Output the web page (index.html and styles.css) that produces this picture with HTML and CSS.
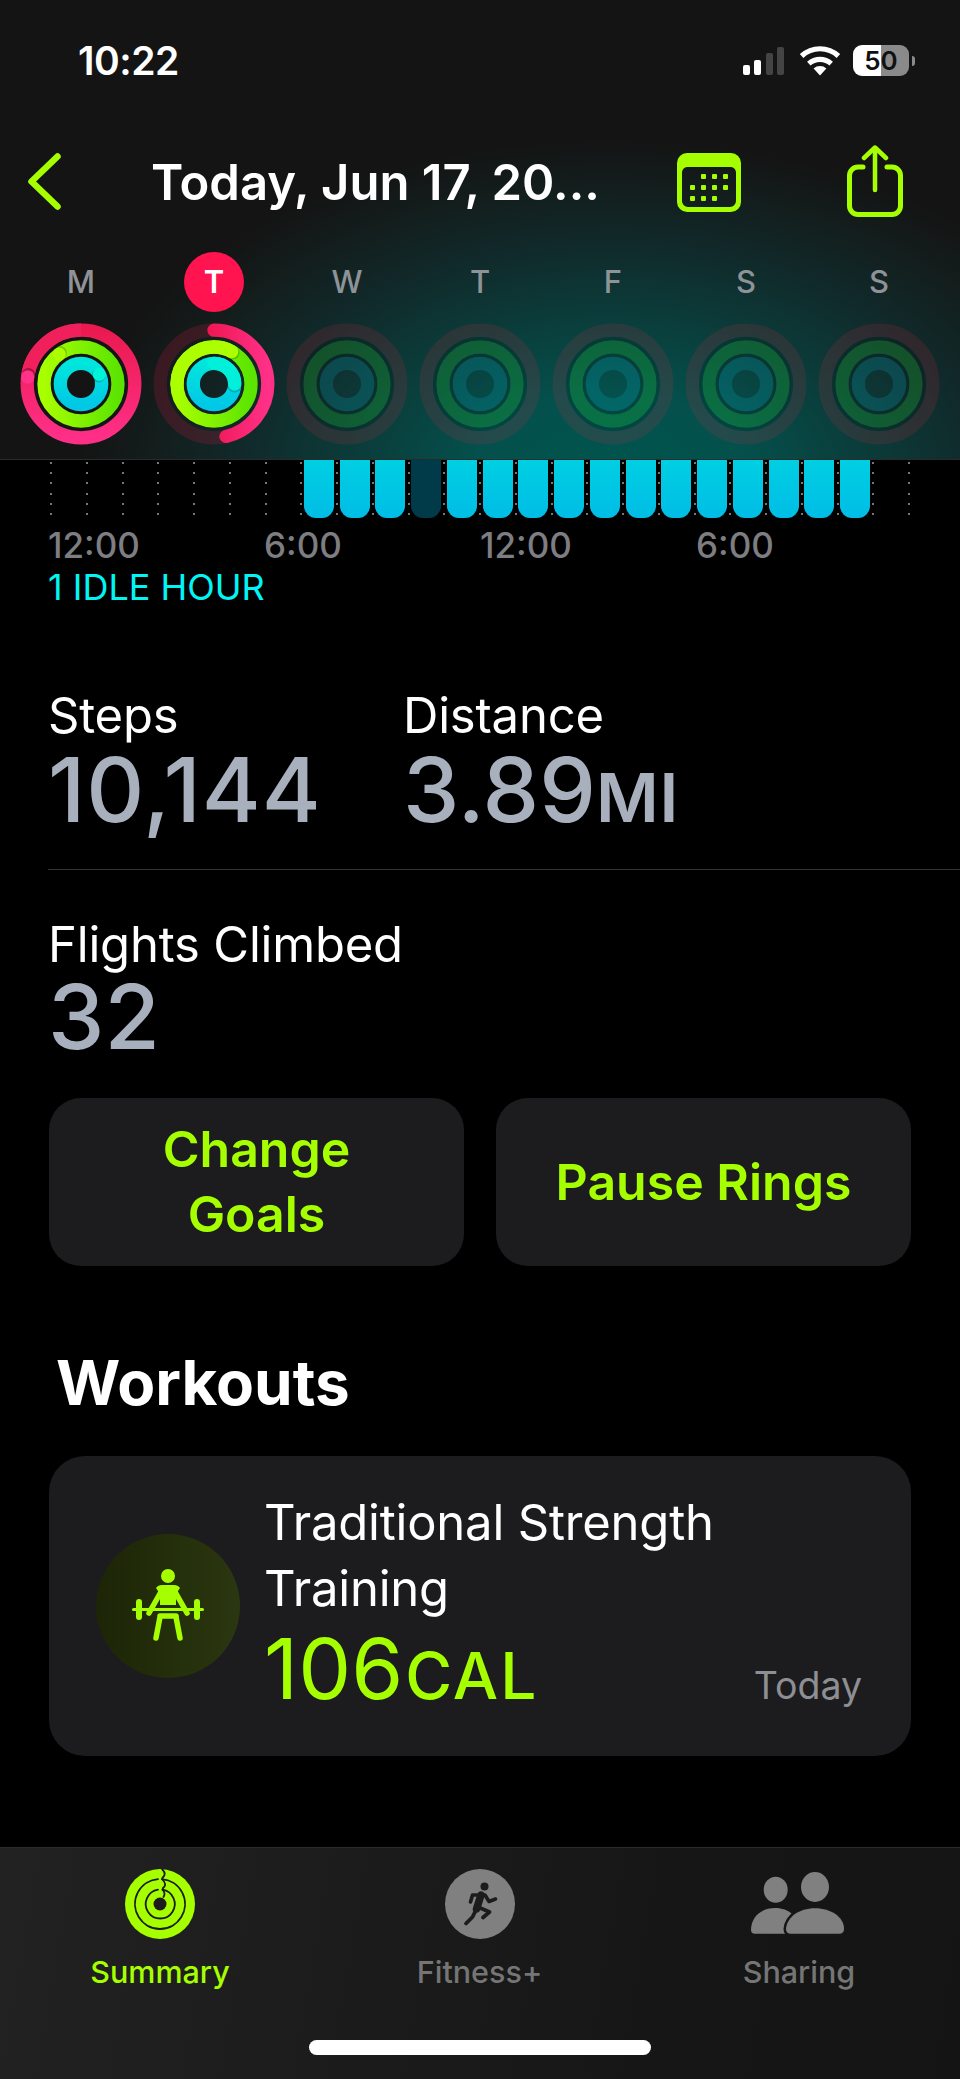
FILE: index.html
```html
<!DOCTYPE html>
<html lang="en">
<head>
    <meta charset="UTF-8">
    <meta name="viewport" content="width=device-width, initial-scale=1.0">
    <title>Activity Summary</title>
    <link rel="stylesheet" href="styles.css">
</head>
<body>
    <!-- Shared gradients and ring shapes -->
    <svg class="defs" width="0" height="0">
        <defs>
            <linearGradient id="moveGrad" x1="0" y1="0" x2="0" y2="1">
                <stop offset="0" stop-color="#ea1a50"/>
                <stop offset="1" stop-color="#ff2f88"/>
            </linearGradient>
            <linearGradient id="moveRed" x1="0" y1="0" x2="0" y2="1">
                <stop offset="0" stop-color="#e00018"/>
                <stop offset="0.5" stop-color="#f01a58"/>
                <stop offset="1" stop-color="#ff3088"/>
            </linearGradient>
            <linearGradient id="moveDark" x1="0" y1="0.5" x2="0.5" y2="0">
                <stop offset="0" stop-color="#c81238"/>
                <stop offset="1" stop-color="#f0205c"/>
            </linearGradient>
            <linearGradient id="exerciseGrad" x1="0" y1="0" x2="1" y2="0">
                <stop offset="0" stop-color="#a8ff00"/>
                <stop offset="1" stop-color="#5ce400"/>
            </linearGradient>
            <linearGradient id="standGrad" x1="0" y1="0" x2="0" y2="1">
                <stop offset="0" stop-color="#00e6dc"/>
                <stop offset="1" stop-color="#00c8e6"/>
            </linearGradient>
            <symbol id="emptyRings" viewBox="0 0 122 122">
                <circle class="ring-empty-move" cx="61" cy="61" r="53.8"/>
                <circle class="ring-empty-gap" cx="61" cy="61" r="45.2"/>
                <circle class="ring-empty-exercise" cx="61" cy="61" r="37"/>
                <circle class="ring-empty-gap" cx="61" cy="61" r="28.9"/>
                <circle class="ring-empty-stand" cx="61" cy="61" r="20.7"/>
            </symbol>
        </defs>
    </svg>

    <header class="top">
        <div class="status">
            <span class="time">10:22</span>
            <div class="status-icons">
                <svg class="signal" width="42" height="28" viewBox="0 0 42 28">
                    <rect x="0" y="18" width="7" height="10" rx="2" fill="#fff"/>
                    <rect x="11" y="13" width="7" height="15" rx="2" fill="#fff"/>
                    <rect x="23" y="6" width="7" height="22" rx="2" fill="#444"/>
                    <rect x="34" y="0" width="7" height="28" rx="2" fill="#444"/>
                </svg>
                <svg class="wifi" width="42" height="31" viewBox="0 0 42 31">
                    <path d="M21 30.5 L14.6 23.4 A10 10 0 0 1 27.4 23.4 Z" fill="#fff"/>
                    <path d="M9.8 18.6 A17 17 0 0 1 32.2 18.6" fill="none" stroke="#fff" stroke-width="5.2"/>
                    <path d="M2.6 11 A27 27 0 0 1 39.4 11" fill="none" stroke="#fff" stroke-width="5.2"/>
                </svg>
                <div class="battery">50</div>
                <div class="battery-nub"></div>
            </div>
        </div>

        <nav class="nav">
            <svg class="back" width="33" height="57" viewBox="0 0 33 57">
                <path d="M29.5 3.5 L3.5 28.5 L29.5 53.5" fill="none" stroke="#a6ff00" stroke-width="6.5" stroke-linecap="round" stroke-linejoin="round"/>
            </svg>
            <h1 class="title">Today, Jun 17, 20...</h1>
            <svg class="calendar" width="64" height="59" viewBox="0 0 64 59">
                <path fill="#a6ff00" fill-rule="evenodd" d="M10 0 H54 A10 10 0 0 1 64 10 V49 A10 10 0 0 1 54 59 H10 A10 10 0 0 1 0 49 V10 A10 10 0 0 1 10 0 Z M10 14 A5.500 5.500 0 0 0 5 19.500 V48 A6 6 0 0 0 11 54 H53 A6 6 0 0 0 59 48 V19.500 A5.500 5.500 0 0 0 54 14 Z"/>
                <g fill="#a6ff00">
                    <rect x="24" y="21" width="5" height="5" rx="1"/><rect x="35" y="21" width="5" height="5" rx="1"/><rect x="46" y="21" width="5" height="5" rx="1"/>
                    <rect x="13" y="32" width="5" height="5" rx="1"/><rect x="24" y="32" width="5" height="5" rx="1"/><rect x="35" y="32" width="5" height="5" rx="1"/><rect x="46" y="32" width="5" height="5" rx="1"/>
                    <rect x="13" y="43" width="5" height="5" rx="1"/><rect x="24" y="43" width="5" height="5" rx="1"/><rect x="35" y="43" width="5" height="5" rx="1"/>
                </g>
            </svg>
            <svg class="share" width="56" height="72" viewBox="0 0 56 72">
                <path d="M16 22 H11 A8.500 8.500 0 0 0 2.500 30.500 V61 A8.500 8.500 0 0 0 11 69.500 H45 A8.500 8.500 0 0 0 53.500 61 V30.500 A8.500 8.500 0 0 0 45 22 H40" fill="none" stroke="#a6ff00" stroke-width="5" stroke-linecap="round"/>
                <path d="M28 3 V45" fill="none" stroke="#a6ff00" stroke-width="4.500" stroke-linecap="round"/>
                <path d="M17 13 L28 2.500 L39 13" fill="none" stroke="#a6ff00" stroke-width="4.500" stroke-linecap="round" stroke-linejoin="round"/>
            </svg>
        </nav>

        <div class="week">
            <div class="day-letter">M</div>
            <div class="day-letter today">T</div>
            <div class="day-letter">W</div>
            <div class="day-letter">T</div>
            <div class="day-letter">F</div>
            <div class="day-letter">S</div>
            <div class="day-letter">S</div>

            <!-- Monday: all rings closed -->
            <svg class="rings" viewBox="0 0 122 122">
                <g fill="none" stroke-width="13.300">
                    <circle cx="61" cy="61" r="53.8" stroke="url(#moveGrad)"/>
                    <circle cx="61" cy="61" r="53.8" pathLength="100" stroke-dasharray="0 77 23 0" stroke="url(#moveDark)" transform="rotate(-90 61 61)"/>
                    <circle cx="61" cy="61" r="37" stroke="url(#exerciseGrad)"/>
                    <circle cx="61" cy="61" r="20.7" stroke="url(#standGrad)"/>
                </g>
                <circle cx="8.500" cy="52" r="7" fill="#000" opacity="0.3"/>
                <circle cx="7.700" cy="54" r="6.650" fill="#ff3189"/>
                <circle cx="40" cy="30" r="7" fill="#000" opacity="0.2"/>
                <circle cx="39.100" cy="31.200" r="6.650" fill="#acff00"/>
                <circle cx="78.500" cy="52.500" r="6.900" fill="#000" opacity="0.2"/>
                <circle cx="79.300" cy="51.300" r="6.500" fill="#00f5d8"/>
            </svg>

            <!-- Tuesday: today, move ring still open -->
            <svg class="rings" viewBox="0 0 122 122">
                <circle cx="61" cy="61" r="53.8" fill="none" stroke="#f0144a" stroke-opacity="0.18" stroke-width="13.300"/>
                <circle class="arc" cx="61" cy="61" r="53.8" pathLength="100" stroke-dasharray="46.400 100" stroke="url(#moveRed)" transform="rotate(-90 61 61)"/>
                <circle cx="61" cy="61" r="37" fill="none" stroke="url(#exerciseGrad)" stroke-width="13.300"/>
                <circle cx="79.500" cy="29.500" r="7" fill="#000" opacity="0.2"/>
                <circle class="arc" cx="61" cy="61" r="37" pathLength="100" stroke-dasharray="8 67 25 0" stroke="#acff00" transform="rotate(-90 61 61)"/>
                <circle cx="61" cy="61" r="20.700" fill="none" stroke="url(#standGrad)" stroke-width="13.300"/>
                <circle cx="81.700" cy="62.500" r="7" fill="#000" opacity="0.2"/>
                <circle class="arc" cx="61" cy="61" r="20.700" pathLength="100" stroke-dasharray="25 100" stroke="#00f0da" transform="rotate(-90 61 61)"/>
            </svg>

            <svg class="rings"><use href="#emptyRings"/></svg>
            <svg class="rings"><use href="#emptyRings"/></svg>
            <svg class="rings"><use href="#emptyRings"/></svg>
            <svg class="rings"><use href="#emptyRings"/></svg>
            <svg class="rings"><use href="#emptyRings"/></svg>
        </div>
    </header>

    <main class="content">
        <div class="chart">
            <div class="slot"></div><div class="slot"></div><div class="slot"></div><div class="slot"></div>
            <div class="slot"></div><div class="slot"></div><div class="slot"></div>
            <div class="slot"><div class="bar"></div></div>
            <div class="slot"><div class="bar"></div></div>
            <div class="slot"><div class="bar"></div></div>
            <div class="slot"><div class="bar idle"></div></div>
            <div class="slot"><div class="bar"></div></div>
            <div class="slot"><div class="bar"></div></div>
            <div class="slot"><div class="bar"></div></div>
            <div class="slot"><div class="bar"></div></div>
            <div class="slot"><div class="bar"></div></div>
            <div class="slot"><div class="bar"></div></div>
            <div class="slot"><div class="bar"></div></div>
            <div class="slot"><div class="bar"></div></div>
            <div class="slot"><div class="bar"></div></div>
            <div class="slot"><div class="bar"></div></div>
            <div class="slot"><div class="bar"></div></div>
            <div class="slot"><div class="bar"></div></div>
            <div class="slot"></div>
            <div class="slot slot-end"></div>
        </div>
        <div class="hours">
            <span>12:00</span><span>6:00</span><span>12:00</span><span>6:00</span>
        </div>
        <div class="idle-note">1 IDLE HOUR</div>

        <div class="stats">
            <div class="stat stat-steps">
                <div class="stat-label">Steps</div>
                <div class="stat-value">10,144</div>
            </div>
            <div class="stat">
                <div class="stat-label">Distance</div>
                <div class="stat-value">3.89<span class="unit">MI</span></div>
            </div>
        </div>
        <div class="divider"></div>
        <div class="stat stat-flights">
            <div class="stat-label">Flights Climbed</div>
            <div class="stat-value">32</div>
        </div>

        <div class="actions">
            <button class="action">Change<br>Goals</button>
            <button class="action">Pause Rings</button>
        </div>

        <h2 class="section-title">Workouts</h2>

        <section class="workout">
            <div class="workout-icon">
                <svg width="144" height="144" viewBox="0 0 144 144">
                    <g fill="#a6ff00">
                        <circle cx="72" cy="42" r="7"/>
                        <path d="M66 51 H78 Q82 51 84 54 L80 60 V71 H64 V60 L60 54 Q62 51 66 51 Z"/>
                        <rect x="36" y="74" width="72" height="3" rx="1.500"/>
                        <rect x="40" y="65" width="6" height="21" rx="3"/>
                        <rect x="98" y="65" width="6" height="21" rx="3"/>
                    </g>
                    <g fill="none" stroke="#a6ff00" stroke-width="5.500" stroke-linecap="round" stroke-linejoin="round">
                        <path d="M66 56 L53 79"/>
                        <path d="M78 56 L91 79"/>
                        <path d="M64 82 H80 M64 83 L60 104"/>
                        <path d="M80 83 L84 104"/>
                    </g>
                </svg>
            </div>
            <div class="workout-text">
                <div class="workout-name">Traditional Strength Training</div>
                <div class="workout-row">
                    <div class="workout-cal">106<span class="cal-unit">CAL</span></div>
                    <div class="workout-date">Today</div>
                </div>
            </div>
        </section>
    </main>

    <footer class="tabbar">
        <div class="tabs">
            <div class="tab active">
                <svg width="70" height="70" viewBox="0 0 70 70">
                    <circle cx="35" cy="35" r="35" fill="#a6ff00"/>
                    <g fill="none" stroke="#1c1c1c" stroke-width="1.800" stroke-linecap="round">
                        <path d="M37 10.100 A25 25 0 1 1 33 10.100"/>
                        <path d="M37.500 20.700 A14.500 14.500 0 1 1 33 20.700"/>
                        <path d="M37 0 Q41 4 39 7 Q37 9 37 10.100 Q41.500 14 39.500 17.500 Q37.500 19 37.500 20.700 Q41 24 38.500 28"/>
                    </g>
                    <circle cx="35" cy="35" r="6.500" fill="#1c1c1c"/>
                </svg>
                <span class="tab-label">Summary</span>
            </div>
            <div class="tab">
                <svg width="70" height="70" viewBox="0 0 70 70">
                    <circle cx="35" cy="35" r="35" fill="#808080"/>
                    <circle cx="39.500" cy="17.500" r="4" fill="#1c1c1c"/>
                    <g fill="none" stroke="#1c1c1c" stroke-linecap="round" stroke-linejoin="round">
                        <path d="M36 26 L31.500 40" stroke-width="7.500"/>
                        <path d="M25.500 33 L27.500 26 H40 L44 32.500 L50.500 30" stroke-width="3.600"/>
                        <path d="M31 41 L27.500 48 L21 54.500" stroke-width="3.800"/>
                        <path d="M33 38 L44.500 43 L38 48.500" stroke-width="3.800"/>
                    </g>
                </svg>
                <span class="tab-label">Fitness+</span>
            </div>
            <div class="tab">
                <svg class="sharing-icon" width="120" height="70" viewBox="0 10 120 70">
                    <g fill="#808080">
                        <ellipse cx="36.700" cy="30.700" rx="12" ry="13"/>
                        <path d="M12 71 C12 58 22 49 36 49 C50 49 60 58 60 71 Q60 74.700 56 74.700 H16 Q12 74.700 12 71 Z"/>
                        <ellipse cx="76" cy="28" rx="14" ry="15"/>
                        <path class="sharing-front" d="M47 70 C48 58 60 49.300 76 49.300 C92 49.300 105 58 105 70 Q105 74.700 100 74.700 H52 Q47 74.700 47 70 Z"/>
                    </g>
                </svg>
                <span class="tab-label">Sharing</span>
            </div>
        </div>
        <div class="home-bar"></div>
    </footer>
</body>
</html>
```

FILE: styles.css
```css
* {
    box-sizing: border-box;
}
html, body {
    margin: 0;
    padding: 0;
}
body {
    width: 960px;
    height: 2079px;
    overflow: hidden;
    display: flex;
    flex-direction: column;
    background-color: #000;
    color: #fff;
    font-family: Inter, "Liberation Sans", sans-serif;
}
.defs {
    display: block;
    width: 0;
    height: 0;
}

/* Header with the teal glow */
.top {
    height: 460px;
    flex: none;
    padding-top: 45px;
    border-bottom: 1px solid #2a2a2a;
    background-color: #141414;
    background-image: radial-gradient(ellipse 530px 340px at 610px 480px, #00554f 0%, #04504c 26%, #0b3b39 50%, #11292a 70%, #131e1d 86%, #141414 100%);
}
.status {
    display: flex;
    justify-content: space-between;
    align-items: center;
    height: 31px;
    padding: 0 45px 0 78px;
}
.time {
    font-size: 39px;
    font-weight: 600;
    line-height: 31px;
    letter-spacing: -0.5px;
}
.status-icons {
    display: flex;
    align-items: center;
}
.signal {
    margin-right: 14px;
}
.wifi {
    margin-right: 12px;
}
.battery {
    width: 56px;
    height: 31px;
    border-radius: 9px;
    background: linear-gradient(90deg, #fff 50%, #8a8a8a 50%);
    color: #111;
    font-size: 26px;
    font-weight: 600;
    line-height: 31px;
    text-align: center;
}
.battery-nub {
    width: 3px;
    height: 10px;
    margin-left: 3px;
    border-radius: 0 3px 3px 0;
    background-color: #8a8a8a;
}
.nav {
    display: flex;
    align-items: center;
    height: 72px;
    margin-top: 69px;
    padding-left: 28px;
}
.title {
    width: 448px;
    margin: 4px 0 0 90px;
    font-size: 49px;
    font-weight: 600;
    line-height: 56px;
    white-space: nowrap;
}
.calendar {
    margin-left: 78px;
    margin-top: 2px;
}
.share {
    margin-left: 106px;
}
.week {
    display: grid;
    grid-template-columns: repeat(7, 133px);
    grid-template-rows: 60px 121px;
    row-gap: 11px;
    margin-top: 35px;
    padding-left: 14.5px;
    justify-items: center;
    align-items: center;
}
.day-letter {
    width: 60px;
    height: 60px;
    border-radius: 50%;
    color: #8f9398;
    font-size: 31px;
    font-weight: 500;
    line-height: 60px;
    text-align: center;
}
.day-letter.today {
    background-color: #ff1450;
    color: #fff;
    font-weight: 600;
}
.rings {
    width: 122px;
    height: 122px;
}
.arc {
    fill: none;
    stroke-width: 13.3;
    stroke-linecap: round;
}
.ring-empty-move,
.ring-empty-exercise,
.ring-empty-stand,
.ring-empty-gap {
    fill: none;
}
.ring-empty-move {
    stroke: rgba(255, 40, 70, 0.13);
    stroke-width: 13.3;
}
.ring-empty-exercise {
    stroke: rgba(40, 255, 40, 0.18);
    stroke-width: 13.3;
}
.ring-empty-stand {
    stroke: rgba(0, 210, 240, 0.16);
    stroke-width: 13.3;
}
.ring-empty-gap {
    stroke: rgba(0, 0, 0, 0.14);
    stroke-width: 3.4;
}

/* Hourly chart */
.content {
    flex: 1;
}
.chart {
    display: flex;
    height: 58px;
    padding-left: 50px;
}
.slot {
    flex: 0 0 35.75px;
    padding-left: 3.5px;
    background-image: repeating-linear-gradient(to bottom, transparent 0, transparent 2px, #777 2px, #777 4px, transparent 4px, transparent 10.2px);
    background-size: 2px 56px;
    background-repeat: no-repeat;
}
.slot-end {
    flex-basis: 2px;
    padding: 0;
}
.bar {
    width: 30px;
    height: 58px;
    border-radius: 0 0 12px 12px;
    background: linear-gradient(#00cfe2, #00bde6);
}
.bar.idle {
    background: #013a48;
}
.hours {
    display: grid;
    grid-template-columns: repeat(4, 216px);
    margin-top: 9px;
    padding-left: 48px;
    color: #7d7d82;
    font-size: 35px;
    font-weight: 500;
    line-height: 36px;
}
.idle-note {
    margin-top: 4px;
    padding-left: 48px;
    color: #00f5f5;
    font-size: 36px;
    line-height: 40px;
}

/* Stats */
.stats {
    display: flex;
    margin-top: 84px;
    padding-left: 48px;
}
.stat-steps {
    width: 355px;
}
.stat-label {
    font-size: 49px;
    line-height: 50px;
    letter-spacing: -0.2px;
}
.stat-value {
    margin-top: 4px;
    color: #a8afbd;
    font-size: 90px;
    font-weight: 500;
    line-height: 90px;
}
.stat-steps .stat-value {
    letter-spacing: 1px;
}
.unit {
    font-size: 68px;
    font-weight: 600;
    letter-spacing: 1px;
    line-height: 1;
}
.divider {
    height: 1px;
    margin: 34px 0 0 48px;
    background-color: #333;
}
.stat-flights {
    margin-top: 50px;
    padding-left: 48px;
}
.stat-flights .stat-value {
    margin-top: 2px;
}
.actions {
    display: flex;
    gap: 32px;
    margin-top: 36px;
    padding: 0 49px;
}
.action {
    flex: 1;
    height: 168px;
    border: none;
    border-radius: 32px;
    background-color: #1c1c1e;
    color: #a6ff00;
    font-family: inherit;
    font-size: 50px;
    font-weight: 600;
    line-height: 65px;
}
.section-title {
    margin: 82px 0 0 56px;
    font-size: 62px;
    font-weight: 700;
    line-height: 70px;
}
.workout {
    display: flex;
    align-items: center;
    height: 300px;
    margin: 38px 49px 0;
    padding: 0 49px 0 47px;
    border-radius: 36px;
    background-color: #1c1c1e;
}
.workout-icon {
    flex: none;
    width: 144px;
    height: 144px;
    border-radius: 50%;
    background: linear-gradient(90deg, #1c2506, #2b3710);
}
.workout-icon svg {
    display: block;
}
.workout-text {
    flex: 1;
    margin-left: 24px;
    padding-bottom: 14px;
}
.workout-name {
    width: 480px;
    font-size: 49px;
    line-height: 66px;
    letter-spacing: -0.2px;
}
.workout-row {
    display: flex;
    justify-content: space-between;
    align-items: baseline;
    margin-top: 7px;
}
.workout-cal {
    color: #a6ff00;
    font-size: 84px;
    line-height: 80px;
}
.cal-unit {
    margin-left: 2px;
    font-size: 64px;
    font-weight: 500;
    letter-spacing: 2px;
    line-height: 1;
}
.workout-date {
    color: #8e8e93;
    font-size: 37.5px;
}

/* Tab bar */
.tabbar {
    flex: none;
    height: 232px;
    border-top: 1px solid #2b2b2b;
    background: linear-gradient(100deg, #222 0%, #161616 70%, #141414 100%);
}
.tabs {
    display: grid;
    grid-template-columns: 320px 319px 320px;
    padding-top: 21px;
}
.tab {
    display: flex;
    flex-direction: column;
    align-items: center;
}
.tab svg {
    display: block;
}
.tab-label {
    margin-top: 15px;
    color: #757575;
    font-size: 30.5px;
    font-weight: 500;
    line-height: 36px;
}
.tab.active .tab-label {
    color: #a6ff00;
}
.sharing-front {
    stroke: #161616;
    stroke-width: 5;
    paint-order: stroke;
}
.home-bar {
    width: 342px;
    height: 15px;
    margin: 50px auto 0;
    border-radius: 8px;
    background-color: #fff;
}
```
